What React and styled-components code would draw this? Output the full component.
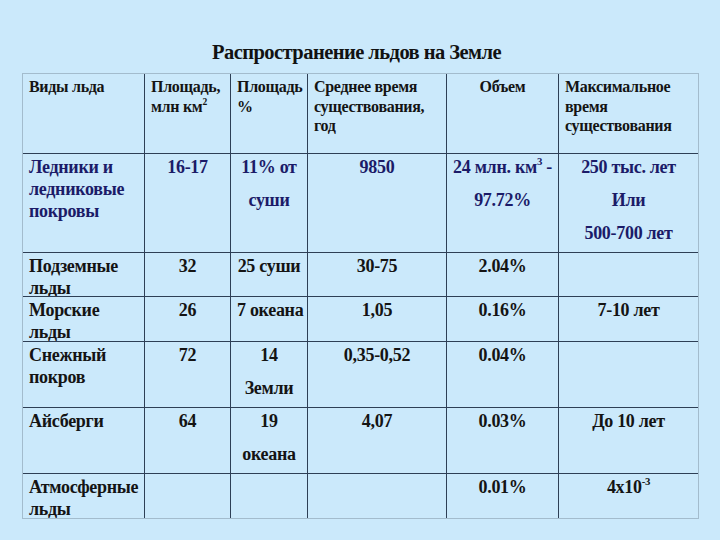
import React from "react";
import styled, { createGlobalStyle } from "styled-components";

const SERIF = `"Liberation Serif", "Times New Roman", serif`;

const Global = createGlobalStyle`
  html, body { margin: 0; padding: 0; background: #cbe9fb; }
`;

const Slide = styled.div`
  width: 720px;
  height: 540px;
  background: #cbe9fb;
  padding-top: 40px;
  box-sizing: border-box;
  overflow: hidden;
  font-family: ${SERIF};
`;

const Title = styled.h1`
  margin: 0 0 9px 0;
  height: 24px;
  font-family: ${SERIF};
  font-size: 20.5px;
  letter-spacing: -0.55px;
  line-height: 24px;
  font-weight: bold;
  text-align: center;
  color: #121212;
  padding-right: 7px;
`;

const Grid = styled.div`
  margin-left: 22px;
  width: 677px;
  box-sizing: border-box;
  display: grid;
  grid-template-columns: 122px 86px 77px 139px 112px 139px;
  grid-template-rows: 80px 99px 44px 45px 66px 66px 44px;
  border: 1px solid #a3bccd;
`;

const Cell = styled.div`
  box-sizing: border-box;
  border-right: ${(p) => (p.$last ? "none" : "1px solid #2e3f55")};
  border-bottom: ${(p) => (p.$bottom ? "none" : "1px solid #2e3f55")};
  padding: ${(p) => (p.$head ? "3px 6px 0 6px" : "2px 6px 0 6px")};
  text-align: ${(p) => p.$align || "left"};
  font-family: ${SERIF};
  font-weight: bold;
  font-size: ${(p) => (p.$head ? "16px" : "18px")};
  letter-spacing: -0.3px;
  line-height: ${(p) => (p.$head ? "19.5px" : "22px")};
  color: ${(p) => (p.$navy ? "#1b1b68" : "#141414")};
  display: flex;
  flex-direction: column;
  gap: 11px;
  overflow: hidden;
`;

const Line = styled.div`
  white-space: nowrap;
`;

const Sup = styled.sup`
  font-size: 0.6em;
  line-height: 0;
  vertical-align: 0.75em;
`;

const header = [
  { t: ["Виды льда"] },
  { t: ["Площадь,", <>млн км<Sup>2</Sup></>] },
  { t: ["Площадь", "%"] },
  { t: ["Среднее время", "существования,", "год"] },
  { t: ["Объем"], align: "center" },
  { t: ["Максимальное", "время", "существования"] },
];

const rows = [
  {
    navy: true,
    cells: [
      { lines: [["Ледники и", "ледниковые", "покровы"]] },
      { lines: [["16-17"]], align: "center" },
      { lines: [["11% от"], ["суши"]], align: "center" },
      { lines: [["9850"]], align: "center" },
      { lines: [[<>24 млн. км<Sup>3</Sup> -</>], ["97.72%"]], align: "center" },
      { lines: [["250 тыс. лет"], ["Или"], ["500-700 лет"]], align: "center" },
    ],
  },
  {
    cells: [
      { lines: [["Подземные", "льды"]] },
      { lines: [["32"]], align: "center" },
      { lines: [["25 суши"]], align: "center" },
      { lines: [["30-75"]], align: "center" },
      { lines: [["2.04%"]], align: "center" },
      { lines: [] },
    ],
  },
  {
    cells: [
      { lines: [["Морские", "льды"]] },
      { lines: [["26"]], align: "center" },
      { lines: [["7 океана"]], align: "center" },
      { lines: [["1,05"]], align: "center" },
      { lines: [["0.16%"]], align: "center" },
      { lines: [["7-10 лет"]], align: "center" },
    ],
  },
  {
    cells: [
      { lines: [["Снежный", "покров"]] },
      { lines: [["72"]], align: "center" },
      { lines: [["14"], ["Земли"]], align: "center" },
      { lines: [["0,35-0,52"]], align: "center" },
      { lines: [["0.04%"]], align: "center" },
      { lines: [] },
    ],
  },
  {
    cells: [
      { lines: [["Айсберги"]] },
      { lines: [["64"]], align: "center" },
      { lines: [["19"], ["океана"]], align: "center" },
      { lines: [["4,07"]], align: "center" },
      { lines: [["0.03%"]], align: "center" },
      { lines: [["До 10 лет"]], align: "center" },
    ],
  },
  {
    cells: [
      { lines: [["Атмосферные", "льды"]] },
      { lines: [] },
      { lines: [] },
      { lines: [] },
      { lines: [["0.01%"]], align: "center" },
      { lines: [[<>4x10<Sup>-3</Sup></>]], align: "center" },
    ],
  },
];

export default function App() {
  return (
    <>
      <Global />
      <Slide>
        <Title>Распространение льдов на Земле</Title>
        <Grid>
          {header.map((h, i) => (
            <Cell key={"h" + i} $head $align={h.align} $last={i === 5}>
              <div>
                {h.t.map((l, j) => (
                  <Line key={j}>{l}</Line>
                ))}
              </div>
            </Cell>
          ))}
          {rows.map((r, ri) =>
            r.cells.map((c, ci) => (
              <Cell
                key={ri + "-" + ci}
                $align={c.align}
                $navy={r.navy}
                $last={ci === 5}
                $bottom={ri === rows.length - 1}
              >
                {c.lines.map((para, pi) => (
                  <div key={pi}>
                    {para.map((l, li) => (
                      <Line key={li}>{l}</Line>
                    ))}
                  </div>
                ))}
              </Cell>
            ))
          )}
        </Grid>
      </Slide>
    </>
  );
}
